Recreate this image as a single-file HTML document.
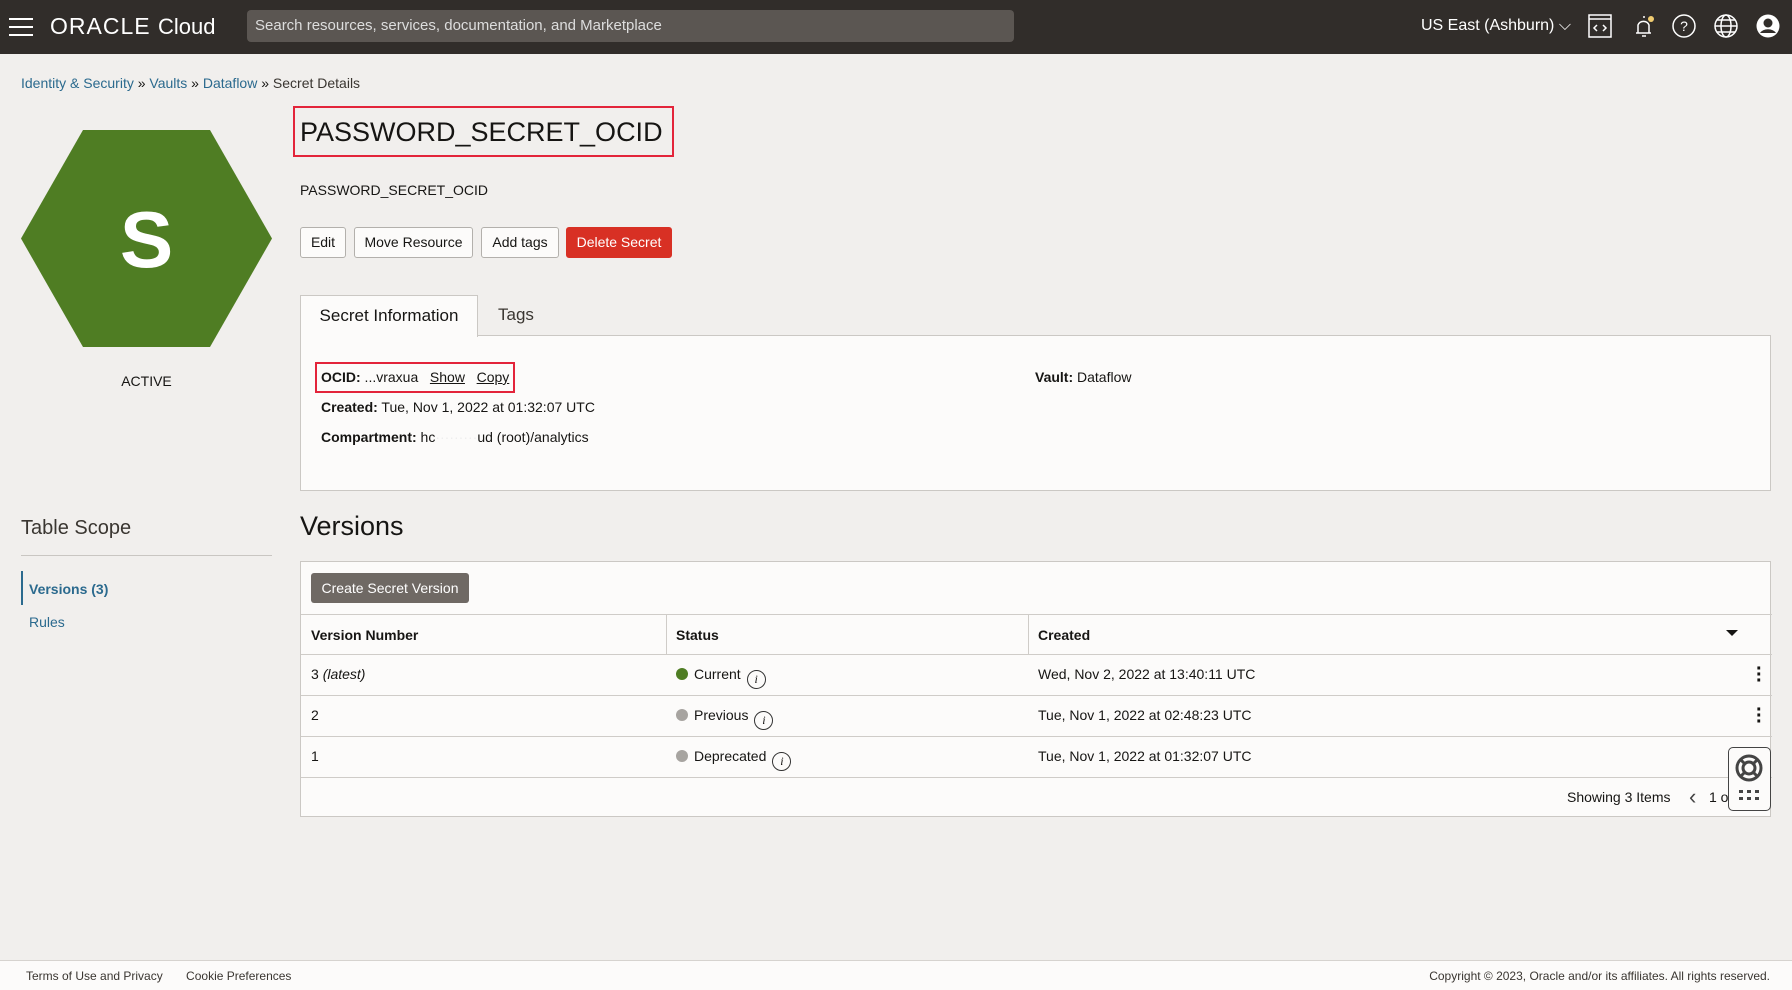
<!DOCTYPE html>
<html><head><meta charset="utf-8"><style>
*{box-sizing:border-box;margin:0;padding:0}
body{width:1792px;height:990px;overflow:hidden;background:#f1efed;font-family:"Liberation Sans",sans-serif;color:#161513;font-size:15px;position:relative}
.a{position:absolute}
.hdr{left:0;top:0;width:1792px;height:54px;background:#312d2a}
.lnk{color:#2b6a8e}
.btn{position:absolute;top:227px;height:31px;border:1px solid #b3b0ac;background:#fcfbfa;border-radius:3px;font-size:14px;line-height:29px;text-align:center}
.panel{background:#fcfbfa;border:1px solid #cbc8c4}
.row{position:absolute;left:0;width:1471px;border-top:1px solid #cfccc8}
.dot{display:inline-block;width:12px;height:12px;border-radius:50%;vertical-align:-1px;margin-right:6px}
.inf{display:inline-block;width:19px;height:19px;border:1.5px solid #333;border-radius:50%;font-size:12px;font-style:italic;text-align:center;line-height:16px;margin-left:6px;vertical-align:-4px;font-family:"Liberation Serif",serif}
.kb{position:absolute;right:10px;font-size:20px;font-weight:bold;line-height:6px;width:4px}
</style></head><body>
<div class="a hdr"></div>
<div class="a" style="left:9px;top:18px;width:24px">
<div style="height:2px;background:#fff;margin-bottom:6px"></div><div style="height:2px;background:#fff;margin-bottom:6px"></div><div style="height:2px;background:#fff"></div></div>
<div class="a" style="left:50px;top:13px;color:#fff;font-size:23px;letter-spacing:1px"><span style="letter-spacing:1px">ORACLE</span> <span style="font-size:22px;letter-spacing:0">Cloud</span></div>
<div class="a" style="left:247px;top:10px;width:767px;height:32px;background:#5b5652;border-radius:4px;color:#ddd;font-size:15px;line-height:32px;padding-left:8px">Search resources, services, documentation, and Marketplace</div>
<div class="a" style="left:1421px;top:17px;color:#fff;font-size:16px">US East (Ashburn) ⌵</div>
<svg class="a" style="left:1588px;top:14px" width="24" height="24" viewBox="0 0 24 24" fill="none" stroke="#fff" stroke-width="1.5"><rect x="1" y="1" width="22" height="22"/><path d="M1 5h22M9 11l-3 3 3 3M15 11l3 3-3 3"/></svg>
<svg class="a" style="left:1631px;top:13px" width="26" height="26" viewBox="0 0 26 26" fill="none" stroke="#fff" stroke-width="1.5"><path d="M5 20h15M7 20v-8a6 6 0 0 1 11 0v8M11 23h4M12 4h2"/><circle cx="20" cy="6" r="3" fill="#f0cc71" stroke="none"/></svg>
<svg class="a" style="left:1672px;top:14px" width="24" height="24" viewBox="0 0 24 24" fill="none" stroke="#fff" stroke-width="1.5"><circle cx="12" cy="12" r="11"/><text x="12" y="17" font-size="14" fill="#fff" stroke="none" text-anchor="middle" font-family="Liberation Sans">?</text></svg>
<svg class="a" style="left:1714px;top:14px" width="24" height="24" viewBox="0 0 24 24" fill="none" stroke="#fff" stroke-width="1.5"><circle cx="12" cy="12" r="11"/><ellipse cx="12" cy="12" rx="5" ry="11"/><path d="M1 12h22M3 6h18M3 18h18"/></svg>
<svg class="a" style="left:1756px;top:14px" width="24" height="24" viewBox="0 0 24 24"><circle cx="12" cy="12" r="11.5" fill="#fff"/><circle cx="12" cy="9" r="4.5" fill="#312d2a"/><path d="M4 19a9 7 0 0 1 16 0" fill="#312d2a"/></svg>

<div class="a" style="left:21px;top:75px;font-size:14px"><span class="lnk">Identity &amp; Security</span> » <span class="lnk">Vaults</span> » <span class="lnk">Dataflow</span> » <span style="color:#3a3631">Secret Details</span></div>

<svg class="a" style="left:21px;top:130px" width="251" height="217" viewBox="0 0 251 217"><polygon points="62,0 189,0 251,108.5 189,217 62,217 0,108.5" fill="#4f7d23"/><text x="125.5" y="137" font-size="80" font-weight="bold" fill="#fff" text-anchor="middle" font-family="Liberation Sans">S</text></svg>
<div class="a" style="left:21px;top:373px;width:251px;text-align:center;font-size:14px">ACTIVE</div>

<div class="a" style="left:293px;top:106px;width:381px;height:51px;border:2px solid #e3243a"></div>
<div class="a" style="left:300px;top:117px;font-size:27px;color:#161513">PASSWORD_SECRET_OCID</div>
<div class="a" style="left:300px;top:182px;font-size:14px">PASSWORD_SECRET_OCID</div>
<div class="btn" style="left:300px;width:46px">Edit</div>
<div class="btn" style="left:354px;width:119px">Move Resource</div>
<div class="btn" style="left:481px;width:78px">Add tags</div>
<div class="btn" style="left:566px;width:106px;background:#d83024;border-color:#d83024;color:#fff">Delete Secret</div>

<div class="a panel" style="left:300px;top:335px;width:1471px;height:156px"></div>
<div class="a" style="left:300px;top:295px;width:178px;height:42px;background:#fcfbfa;border:1px solid #cbc8c4;border-bottom:none;font-size:17px;text-align:center;line-height:40px">Secret Information</div>
<div class="a" style="left:498px;top:305px;font-size:17px;color:#3a3631">Tags</div>
<div class="a" style="left:315px;top:362px;width:200px;height:31px;border:2px solid #e3243a"></div>
<div class="a" style="left:321px;top:369px;font-size:14px"><b>OCID:</b> ...vraxua &nbsp; <u>Show</u> &nbsp; <u>Copy</u></div>
<div class="a" style="left:321px;top:399px;font-size:14px"><b>Created:</b> Tue, Nov 1, 2022 at 01:32:07 UTC</div>
<div class="a" style="left:321px;top:429px;font-size:14px"><b>Compartment:</b> hc<span style="color:#eee">·········</span>ud (root)/analytics</div>
<div class="a" style="left:1035px;top:369px;font-size:14px"><b>Vault:</b> Dataflow</div>

<div class="a" style="left:21px;top:517px;font-size:20px;color:#3a3631">Table Scope</div>
<div class="a" style="left:21px;top:555px;width:251px;height:1px;background:#c9c6c2"></div>
<div class="a" style="left:21px;top:571px;width:2px;height:34px;background:#2b6a8e"></div>
<div class="a lnk" style="left:29px;top:581px;font-size:14px;font-weight:bold">Versions (3)</div>
<div class="a lnk" style="left:29px;top:614px;font-size:14px">Rules</div>

<div class="a" style="left:300px;top:511px;font-size:27px">Versions</div>
<div class="a panel" style="left:300px;top:561px;width:1471px;height:256px">
<div class="a" style="left:10px;top:11px;width:158px;height:30px;background:#6f6964;color:#fff;border-radius:3px;font-size:14px;line-height:30px;text-align:center">Create Secret Version</div>
<div class="row" style="top:52px;height:40px"></div>
<div class="a" style="left:10px;top:65px;font-size:14px;font-weight:bold">Version Number</div>
<div class="a" style="left:365px;top:52px;width:1px;height:40px;background:#cfccc8"></div>
<div class="a" style="left:375px;top:65px;font-size:14px;font-weight:bold">Status</div>
<div class="a" style="left:727px;top:52px;width:1px;height:40px;background:#cfccc8"></div>
<div class="a" style="left:737px;top:65px;font-size:14px;font-weight:bold">Created</div>
<div class="a" style="left:1425px;top:68px;border-left:6px solid transparent;border-right:6px solid transparent;border-top:6px solid #161513"></div>
<div class="row" style="top:92px"></div>
<div class="a" style="left:10px;top:104px;font-size:14px">3 <i>(latest)</i></div>
<div class="a" style="left:375px;top:104px;font-size:14px"><span class="dot" style="background:#4f7d23"></span>Current<span class="inf">i</span></div>
<div class="a" style="left:737px;top:104px;font-size:14px">Wed, Nov 2, 2022 at 13:40:11 UTC</div>
<div class="kb" style="top:104px">·<br>·<br>·</div>
<div class="row" style="top:133px"></div>
<div class="a" style="left:10px;top:145px;font-size:14px">2</div>
<div class="a" style="left:375px;top:145px;font-size:14px"><span class="dot" style="background:#a7a4a0"></span>Previous<span class="inf">i</span></div>
<div class="a" style="left:737px;top:145px;font-size:14px">Tue, Nov 1, 2022 at 02:48:23 UTC</div>
<div class="kb" style="top:145px">·<br>·<br>·</div>
<div class="row" style="top:174px"></div>
<div class="a" style="left:10px;top:186px;font-size:14px">1</div>
<div class="a" style="left:375px;top:186px;font-size:14px"><span class="dot" style="background:#a7a4a0"></span>Deprecated<span class="inf">i</span></div>
<div class="a" style="left:737px;top:186px;font-size:14px">Tue, Nov 1, 2022 at 01:32:07 UTC</div>
<div class="row" style="top:215px"></div>
<div class="a" style="left:1266px;top:227px;font-size:14px">Showing 3 Items</div>
<div class="a" style="left:1388px;top:222px;font-size:22px;color:#444">‹</div>
<div class="a" style="left:1408px;top:227px;font-size:14px">1 o</div>
</div>
<div class="a" style="left:1728px;top:747px;width:43px;height:64px;border:1.5px solid #444;border-radius:5px;background:#fcfbfa">
<svg style="position:absolute;left:5px;top:5px" width="30" height="30" viewBox="0 0 30 30" fill="none" stroke="#444" stroke-width="3"><circle cx="15" cy="15" r="12"/><circle cx="15" cy="15" r="6"/><path d="M6 6l5 5M24 6l-5 5M6 24l5-5M24 24l-5-5"/></svg>
<div style="position:absolute;left:10px;top:42px;width:20px;font-size:0">
<svg width="20" height="12" viewBox="0 0 20 12" fill="#444"><rect x="0" y="0" width="4" height="3"/><rect x="8" y="0" width="4" height="3"/><rect x="16" y="0" width="4" height="3"/><rect x="0" y="7" width="4" height="3"/><rect x="8" y="7" width="4" height="3"/><rect x="16" y="7" width="4" height="3"/></svg></div>
</div>

<div class="a" style="left:0;top:960px;width:1792px;height:30px;background:#fcfbfa;border-top:1px solid #d6d3cf"></div>
<div class="a" style="left:26px;top:969px;font-size:12px;color:#3a3631">Terms of Use and Privacy &nbsp; &nbsp; &nbsp; Cookie Preferences</div>
<div class="a" style="right:22px;top:969px;font-size:12px;color:#3a3631">Copyright © 2023, Oracle and/or its affiliates. All rights reserved.</div>
</body></html>
